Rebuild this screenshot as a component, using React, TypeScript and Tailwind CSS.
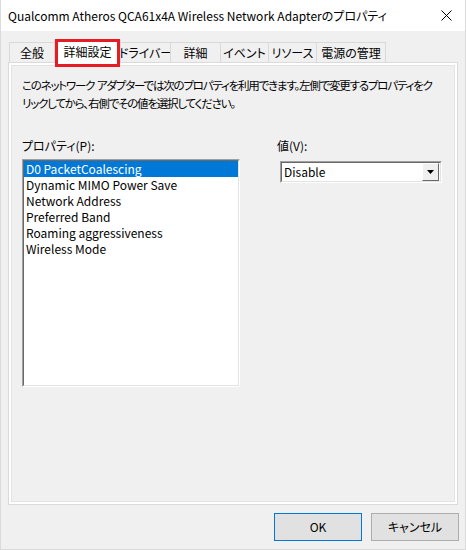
const tabs = [
  { label: "全般", w: "w-[46px]" },
  { label: "詳細設定", w: "w-[67px]", active: true },
  { label: "ドライバー", w: "w-[51px]" },
  { label: "詳細", w: "w-[51px]" },
  { label: "イベント", w: "w-[49px]" },
  { label: "リソース", w: "w-[49px]" },
  { label: "電源の管理", w: "w-[70px]" },
]

const props = [
  "D0 PacketCoalescing",
  "Dynamic MIMO Power Save",
  "Network Address",
  "Preferred Band",
  "Roaming aggressiveness",
  "Wireless Mode",
]

export default function App() {
  return (
    <div className="w-[466px] h-[550px] bg-[#f0f0f0] border-x border-b border-[#dadada] flex flex-col text-[12px] text-black font-['Noto_Sans_CJK_JP',sans-serif] [font-feature-settings:'palt']">
      {/* title bar */}
      <div className="h-[31px] shrink-0 bg-white flex items-center pl-[7px] pr-[13px]">
        <span className="flex-1 whitespace-nowrap">Qualcomm Atheros QCA61x4A Wireless Network Adapterのプロパティ</span>
        <svg width="11" height="11" viewBox="0 0 11 11" className="text-black">
          <path d="M0.5 0.5 L10.5 10.5 M10.5 0.5 L0.5 10.5" stroke="currentColor" strokeWidth="1" />
        </svg>
      </div>

      {/* tabs */}
      <div className="flex items-end h-[31px] pl-[9px] shrink-0">
        {tabs.map((t) =>
          t.active ? (
            <div key={t.label} className={`relative z-10 -ml-px -mb-px h-[23px] ${t.w} bg-white border border-b-0 border-[#d9d9d9] flex items-center justify-center`}>
              {t.label}
              <div className="absolute left-0 -top-[2px] right-0 -bottom-[4px] border-[3px] border-[#e51c23]" />
            </div>
          ) : (
            <div key={t.label} className={`-ml-px h-[20px] ${t.w} bg-[#f0f0f0] border border-b-0 border-[#d9d9d9] flex items-center justify-center whitespace-nowrap`}>
              {t.label}
            </div>
          )
        )}
      </div>

      {/* panel */}
      <div className="flex-1 mx-[7px] border border-[#dadada] bg-white p-[2px] flex">
        <div className="flex-1 border border-[#e3e3e3] bg-[#f0f0f0] pl-[10px] pt-[10px] flex flex-col">
          <p className="leading-[18px] whitespace-nowrap text-[11.5px] tracking-[-1.2px]">
            このネットワーク&nbsp;&nbsp;アダプターでは次のプロパティを利用できます。左側で変更するプロパティをク
            <br />
            リックしてから、右側でその値を選択してください。
          </p>

          <div className="flex mt-[25px]">
            <div className="w-[218px] flex flex-col">
              <span className="leading-[18px]">プロパティ(P):</span>
              <div className="mt-[4px] h-[228px] border-t border-l border-[#a0a0a0] border-b border-r border-b-white border-r-white flex">
                <div className="flex-1 border-t border-l border-[#696969] border-b border-r border-b-[#e3e3e3] border-r-[#e3e3e3] bg-white flex flex-col">
                  {props.map((p, i) => (
                    <div
                      key={p}
                      className={`h-[16px] leading-[16px] pl-[2px] whitespace-nowrap ${i === 0 ? "bg-[#0078d7] text-white" : ""}`}
                    >
                      {p}
                    </div>
                  ))}
                </div>
              </div>
            </div>

            <div className="ml-[40px] flex flex-col">
              <span className="leading-[18px] -ml-[3px]">値(V):</span>
              <div className="mt-[6px] w-[162px] h-[22px] border-t border-l border-[#a0a0a0] border-b border-r border-b-white border-r-white flex">
                <div className="flex-1 border-t border-l border-[#696969] border-b border-r border-b-[#e3e3e3] border-r-[#e3e3e3] bg-white flex items-center pl-[2px] pr-px">
                  <span className="flex-1">Disable</span>
                  <div className="w-[17px] h-[18px] bg-[#f0f0f0] border-t border-l border-white border-b border-r border-b-[#696969] border-r-[#696969] flex items-center justify-center">
                    <svg width="7" height="4" viewBox="0 0 7 4">
                      <path d="M0 0 H7 L3.5 4 Z" fill="#000" />
                    </svg>
                  </div>
                </div>
              </div>
            </div>
          </div>
        </div>
      </div>

      {/* buttons */}
      <div className="h-[44px] shrink-0 flex justify-end items-start pt-[8px] pr-[6px] gap-[9px]">
        <button className="w-[88px] h-[28px] bg-[#e1e1e1] border border-[#0078d7] flex items-center justify-center">OK</button>
        <button className="w-[88px] h-[28px] bg-[#e1e1e1] border border-[#adadad] flex items-center justify-center">キャンセル</button>
      </div>
    </div>
  )
}
